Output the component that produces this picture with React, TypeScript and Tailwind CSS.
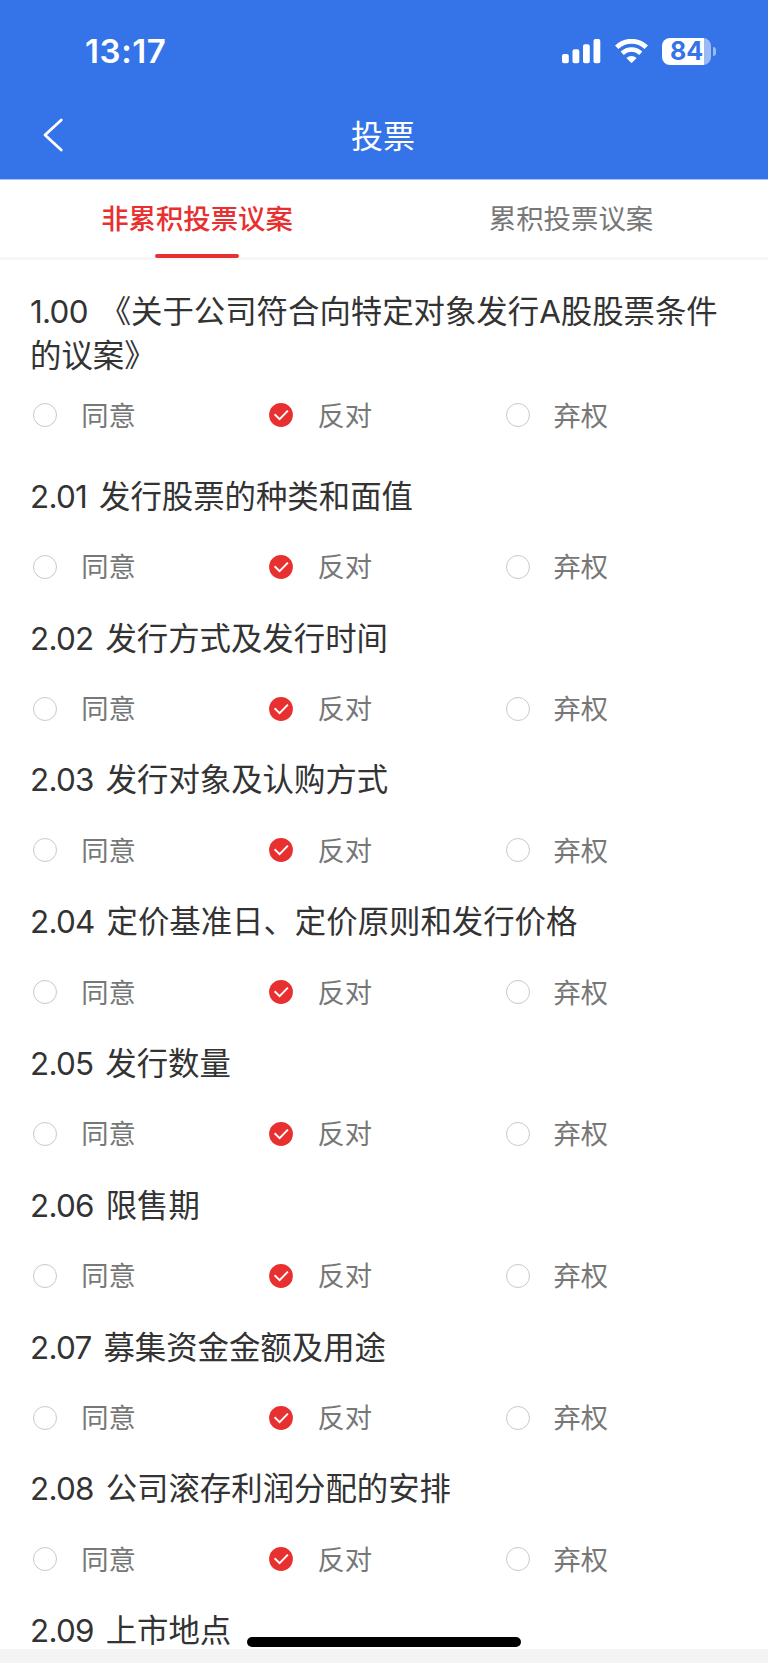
import { clsx } from "clsx";

const proposals = [
  { no: "2.01", title: "发行股票的种类和面值" },
  { no: "2.02", title: "发行方式及发行时间" },
  { no: "2.03", title: "发行对象及认购方式" },
  { no: "2.04", title: "定价基准日、定价原则和发行价格" },
  { no: "2.05", title: "发行数量" },
  { no: "2.06", title: "限售期" },
  { no: "2.07", title: "募集资金金额及用途" },
  { no: "2.08", title: "公司滚存利润分配的安排" },
];

const choices = ["同意", "反对", "弃权"];

function SignalIcon() {
  return (
    <svg width="39" height="25" viewBox="0 0 39 25" fill="currentColor">
      <rect x="0" y="15" width="6.8" height="9.3" rx="2" />
      <rect x="10.5" y="10.3" width="6.8" height="14" rx="2" />
      <rect x="21" y="5.2" width="6.8" height="19.1" rx="2" />
      <rect x="31.5" y="0" width="6.8" height="24.3" rx="2" />
    </svg>
  );
}

function WifiIcon() {
  return (
    <svg width="33" height="25" viewBox="0 0 33 25" fill="none">
      <path d="M1.7 8.3C10.3 0.2 22.7 0.2 31.3 8.3" stroke="currentColor" strokeWidth="4.8" />
      <path d="M7.2 14.2C12.7 9.2 20.3 9.2 25.8 14.2" stroke="currentColor" strokeWidth="4.6" />
      <path d="M11.4 18.9C14.4 16.2 18.6 16.2 21.6 18.9L17.2 23.6Q16.5 24.3 15.8 23.6Z" fill="currentColor" />
    </svg>
  );
}

function Battery() {
  return (
    <div className="flex items-center gap-[2px]">
      <div className="flex h-[27px] w-[49px] items-center justify-center rounded-[8px] bg-[linear-gradient(to_right,#fff_42px,#9bb9f4_42px)]">
        <span className="pt-px text-[25px] leading-none font-bold text-[#3573e8]">84</span>
      </div>
      <div className="h-[9px] w-[3px] rounded-r-full bg-[#9bb9f4]" />
    </div>
  );
}

function Radio({ checked }: { checked: boolean }) {
  if (!checked) {
    return <span className="size-6 shrink-0 rounded-full border border-[#c9c9c9]" />;
  }
  return (
    <svg className="size-6 shrink-0" viewBox="0 0 24 24" fill="none">
      <circle cx="12" cy="12" r="11.9" fill="#e93030" />
      <path d="M5.6 11.3L10.6 16.2L18.9 7.6" stroke="#fff" strokeWidth="1.9" />
    </svg>
  );
}

function Choices() {
  return (
    <div className="flex h-[76px] items-center pl-[3.3px]">
      {choices.map((label) => (
        <div key={label} className="flex w-[236.15px] shrink-0 items-center gap-6">
          <Radio checked={label === "反对"} />
          <span className="pt-[2px] text-[27.3px] leading-none text-[#777]">{label}</span>
        </div>
      ))}
    </div>
  );
}

function ProposalNo({ no }: { no: string }) {
  return <span className="mr-[3px] tracking-[-0.7px]">{no}</span>;
}

function Tab({ label, active }: { label: string; active?: boolean }) {
  return (
    <div
      className={clsx(
        "flex flex-1 flex-col items-center text-[27.4px]",
        active ? "font-medium text-[#e93030]" : "text-[#777]"
      )}
    >
      <span className="h-[74px] leading-[78px]">{label}</span>
      {active && <span className="h-[4px] w-[84px] shrink-0 rounded-full bg-[#e93030]" />}
    </div>
  );
}

export default function App() {
  return (
    <div className="relative flex h-[1663px] w-[768px] flex-col overflow-hidden bg-white font-['Inter','Noto_Sans_CJK_SC',sans-serif]">
      <header className="h-[179px] shrink-0 bg-[#3573e8] text-white">
        {/* Status bar */}
        <div className="flex h-[102px] items-center justify-between pr-[52px] pl-[85px]">
          <span className="pt-px text-[33px] leading-none font-semibold tracking-[0.6px]">13:17</span>
          <div className="flex items-center gap-[14px]">
            <SignalIcon />
            <WifiIcon />
            <Battery />
          </div>
        </div>
        {/* Nav bar */}
        <div className="grid h-[68px] grid-cols-3 items-center">
          <svg className="mb-[2px] ml-[42px]" width="22" height="36" viewBox="0 0 22 36" fill="none">
            <path d="M19.3 3L3 18L19.3 33" stroke="currentColor" strokeWidth="2.8" strokeLinecap="round" strokeLinejoin="round" />
          </svg>
          <h1 className="pt-[2px] pr-[2px] text-center text-[32px] leading-none">投票</h1>
        </div>
      </header>

      <nav className="flex h-[81px] shrink-0 border-t border-b-3 border-t-[#a9c4f6] border-b-[#f6f6f6] px-[10px]">
        <Tab label="非累积投票议案" active />
        <Tab label="累积投票议案" />
      </nav>

      <main className="flex min-h-0 flex-1 flex-col pt-[31px] pl-[30px] text-[#333]">
        <section className="mb-[11.6px] shrink-0">
          <h2 className="h-[86.2px] text-[31.4px] leading-[43.7px]">
            <ProposalNo no="1.00" /> 《关于公司符合向特定对象发行A股股票条件
            <br />
            的议案》
          </h2>
          <Choices />
        </section>
        {proposals.map((p) => (
          <section key={p.no} className="h-[141.8px] shrink-0">
            <h2 className="text-[31.4px] leading-[64px]">
              <ProposalNo no={p.no} /> {p.title}
            </h2>
            <Choices />
          </section>
        ))}
        <h2 className="text-[31.4px] leading-[64px]">
          <ProposalNo no="2.09" /> 上市地点
        </h2>
      </main>

      <footer className="h-[14px] shrink-0 bg-[#f4f4f4]" />
      {/* Home indicator */}
      <div className="absolute top-[1636.5px] left-[247px] h-[10px] w-[274px] rounded-full bg-black" />
    </div>
  );
}
